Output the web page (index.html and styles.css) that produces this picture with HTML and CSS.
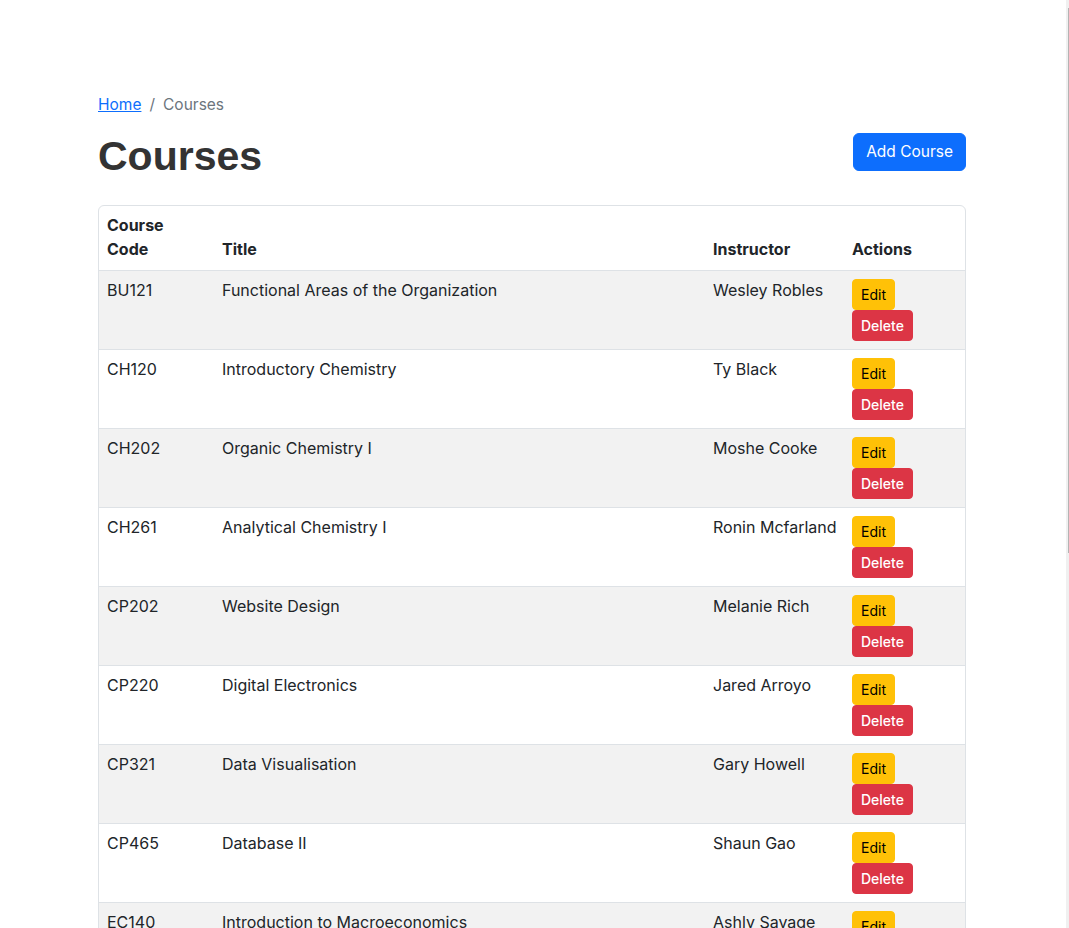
FILE: index.html
```html
<!DOCTYPE html>
<html lang="en">
<head>
<meta charset="utf-8">
<title>Courses</title>
<link rel="stylesheet" href="styles.css">
</head>
<body>
<main class="container">
  <nav class="breadcrumb">
    <a href="#" class="crumb-link">Home</a>
    <span class="crumb-sep">/</span>
    <span class="crumb-current">Courses</span>
  </nav>
  <div class="page-head">
    <h1 class="page-title">Courses</h1>
    <a href="#" class="btn btn-primary">Add Course</a>
  </div>
  <div class="table-wrap">
    <table class="courses">
      <colgroup>
        <col class="c-code"><col class="c-title"><col class="c-instr"><col class="c-act">
      </colgroup>
      <thead>
        <tr>
          <th><span class="wrap-head">Course Code</span></th>
          <th>Title</th>
          <th>Instructor</th>
          <th>Actions</th>
        </tr>
      </thead>
      <tbody>
        <tr><td>BU121</td><td>Functional Areas of the Organization</td><td class="instr">Wesley Robles</td><td class="act"><div class="act-stack"><a class="btn-sm btn-edit" href="#">Edit</a><a class="btn-sm btn-del" href="#">Delete</a></div></td></tr>
        <tr><td>CH120</td><td>Introductory Chemistry</td><td class="instr">Ty Black</td><td class="act"><div class="act-stack"><a class="btn-sm btn-edit" href="#">Edit</a><a class="btn-sm btn-del" href="#">Delete</a></div></td></tr>
        <tr><td>CH202</td><td>Organic Chemistry I</td><td class="instr">Moshe Cooke</td><td class="act"><div class="act-stack"><a class="btn-sm btn-edit" href="#">Edit</a><a class="btn-sm btn-del" href="#">Delete</a></div></td></tr>
        <tr><td>CH261</td><td>Analytical Chemistry I</td><td class="instr">Ronin Mcfarland</td><td class="act"><div class="act-stack"><a class="btn-sm btn-edit" href="#">Edit</a><a class="btn-sm btn-del" href="#">Delete</a></div></td></tr>
        <tr><td>CP202</td><td>Website Design</td><td class="instr">Melanie Rich</td><td class="act"><div class="act-stack"><a class="btn-sm btn-edit" href="#">Edit</a><a class="btn-sm btn-del" href="#">Delete</a></div></td></tr>
        <tr><td>CP220</td><td>Digital Electronics</td><td class="instr">Jared Arroyo</td><td class="act"><div class="act-stack"><a class="btn-sm btn-edit" href="#">Edit</a><a class="btn-sm btn-del" href="#">Delete</a></div></td></tr>
        <tr><td>CP321</td><td>Data Visualisation</td><td class="instr">Gary Howell</td><td class="act"><div class="act-stack"><a class="btn-sm btn-edit" href="#">Edit</a><a class="btn-sm btn-del" href="#">Delete</a></div></td></tr>
        <tr><td>CP465</td><td>Database II</td><td class="instr">Shaun Gao</td><td class="act"><div class="act-stack"><a class="btn-sm btn-edit" href="#">Edit</a><a class="btn-sm btn-del" href="#">Delete</a></div></td></tr>
        <tr><td>EC140</td><td>Introduction to Macroeconomics</td><td class="instr">Ashly Savage</td><td class="act"><div class="act-stack"><a class="btn-sm btn-edit" href="#">Edit</a><a class="btn-sm btn-del" href="#">Delete</a></div></td></tr>
      </tbody>
    </table>
  </div>
</main>
<div class="scrollbar" aria-hidden="true"><div class="scroll-thumb"></div></div>
</body>
</html>
```
FILE: styles.css
```css
* { box-sizing: border-box; }

body {
  margin: 0;
  padding-right: 5px;
  background: #fff;
  color: #212529;
  font-family: Inter, "Liberation Sans", Arial, sans-serif;
  font-size: 16px;
  line-height: 24px;
}

.container {
  width: 868px;
  margin: 0 auto;
  padding: 92px 0 24px;
}

.breadcrumb {
  display: flex;
  align-items: center;
  height: 24px;
  margin-top: 1px;
  margin-bottom: 15px;
  color: #6c757d;
  font-size: 15.5px;
}
.crumb-link { color: #0d6efd; text-decoration: underline; }
.crumb-sep { padding: 0 8px; }
.crumb-current { color: #6c757d; }

.page-head {
  display: flex;
  justify-content: space-between;
  align-items: flex-start;
  margin-bottom: 25px;
}
.page-title {
  margin: 0;
  font-family: "Liberation Sans", Arial, sans-serif;
  font-size: 41px;
  line-height: 48px;
  font-weight: 700;
  color: #333;
}

.btn {
  display: inline-block;
  text-decoration: none;
  border: 1px solid transparent;
  border-radius: 6px;
  padding: 6px 12px;
  font-size: 16px;
  line-height: 24px;
}
.btn-primary {
  margin-top: 1px;
  background: #0d6efd;
  border-color: #0d6efd;
  color: #fff;
  font-size: 15.5px;
}

.table-wrap {
  border: 1px solid #dee2e6;
  border-radius: 6px;
  overflow: hidden;
}
.courses {
  width: 100%;
  border-collapse: collapse;
  table-layout: fixed;
}
.c-code { width: 115px; }
.c-title { width: 491px; }
.c-instr { width: 139px; }
.c-act { width: 121px; }

.courses th,
.courses td {
  padding: 7px 8px 9px;
  text-align: left;
  vertical-align: top;
}
.courses th {
  padding: 7px 8px 9px;
  vertical-align: bottom;
  font-weight: 700;
  border-bottom: 1px solid #dee2e6;
}
.wrap-head { display: inline-block; max-width: 70px; }
.courses td.instr { white-space: nowrap; }

.courses tbody tr { border-bottom: 1px solid #dee2e6; }
.courses tbody tr:last-child { border-bottom: 0; }
.courses tbody tr:nth-child(odd) { background: #f2f2f2; }

.courses td.act { padding: 8px; }
.act-stack {
  display: flex;
  flex-direction: column;
  align-items: flex-start;
}
.btn-sm {
  display: inline-block;
  text-decoration: none;
  border: 1px solid transparent;
  border-radius: 4px;
  padding: 4px 8px;
  font-size: 14px;
  line-height: 21px;
}
.btn-edit { background: #ffc107; border-color: #ffc107; color: #000; }
.btn-del { background: #dc3545; border-color: #dc3545; color: #fff; font-weight: 500; }

.scrollbar {
  position: fixed;
  top: 0;
  right: 0;
  width: 3px;
  height: 100vh;
  background: #f0f0f0;
}
.scroll-thumb {
  position: absolute;
  top: 8px;
  right: 0;
  width: 1px;
  height: 545px;
  background: #b4b4b4;
}
```
